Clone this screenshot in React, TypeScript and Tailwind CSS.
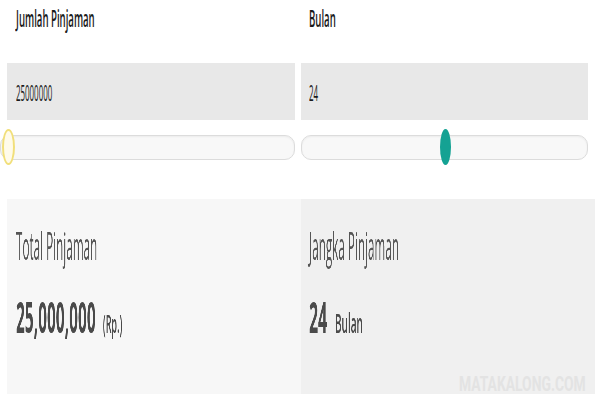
import React from "react";

const font = { fontFamily: '"Open Sans", "Noto Sans", sans-serif' };

export default function App() {
  return (
    <div className="relative w-[600px] h-[400px] bg-white overflow-hidden antialiased" style={font}>
      <div className="flex">
        {/* left column */}
        <div className="w-[295px] flex flex-col">
          <div className="pl-[16px] mt-[6px] h-[24px] leading-none">
            <span className="inline-block origin-left scale-x-[0.40] text-[24px] font-semibold text-[#1a1a1a] whitespace-nowrap">
              Jumlah Pinjaman
            </span>
          </div>
          <div className="ml-[7px] mt-[33px] h-[57px] bg-[#e8e8e8] flex items-center pl-[9px]">
            <span className="inline-block origin-left scale-x-[0.36] text-[22px] text-[#1a1a1a] leading-none whitespace-nowrap">
              25000000
            </span>
          </div>
          <div className="relative mt-[15px] h-[25px] rounded-[10px] border border-[#dcdcdc] bg-[#f8f8f8] shadow-[inset_0_1px_2px_rgba(0,0,0,0.05)]">
            <div className="absolute left-[1px] top-[-7px] w-[13px] h-[36px] rounded-[50%] border-2 border-[#f1df7a] bg-[#fffbea]" />
          </div>
        </div>
        {/* right column */}
        <div className="ml-[6px] w-[287px] flex flex-col">
          <div className="pl-[8px] mt-[6px] h-[24px] leading-none">
            <span className="inline-block origin-left scale-x-[0.40] text-[24px] font-semibold text-[#1a1a1a] whitespace-nowrap">
              Bulan
            </span>
          </div>
          <div className="mt-[33px] h-[57px] bg-[#e8e8e8] flex items-center pl-[8px]">
            <span className="inline-block origin-left scale-x-[0.36] text-[22px] text-[#1a1a1a] leading-none whitespace-nowrap">
              24
            </span>
          </div>
          <div className="relative mt-[15px] h-[25px] rounded-[10px] border border-[#dcdcdc] bg-[#f8f8f8] shadow-[inset_0_1px_2px_rgba(0,0,0,0.05)]">
            <div className="absolute left-[138px] top-[-7px] w-[11px] h-[36px] rounded-[50%] bg-[#14a293]" />
          </div>
        </div>
      </div>

      {/* bottom panels */}
      <div className="flex mt-[39px] pl-[7px]">
        <div className="w-[294px] h-[195px] bg-[#f7f7f7] flex flex-col pl-[9px]">
          <div className="mt-[26px] h-[39px] leading-none">
            <span className="inline-block origin-left scale-x-[0.30] will-change-transform text-[39px] font-normal text-[#555] whitespace-nowrap">
              Total Pinjaman
            </span>
          </div>
          <div className="mt-[31px] leading-none">
            <span className="inline-flex items-baseline origin-left scale-x-[0.36] will-change-transform text-[#4a4a4a] whitespace-nowrap">
              <span className="text-[43px] font-bold leading-none">25,000,000</span>
              <span className="ml-[20px] text-[25px] font-semibold leading-none">(Rp.)</span>
            </span>
          </div>
        </div>
        <div className="w-[294px] h-[195px] bg-[#f0f0f0] flex flex-col pl-[8px]">
          <div className="mt-[26px] h-[39px] leading-none">
            <span className="inline-block origin-left scale-x-[0.30] will-change-transform text-[39px] font-normal text-[#555] whitespace-nowrap">
              Jangka Pinjaman
            </span>
          </div>
          <div className="mt-[31px] leading-none">
            <span className="inline-flex items-baseline origin-left scale-x-[0.37] will-change-transform text-[#4a4a4a] whitespace-nowrap">
              <span className="text-[43px] font-bold leading-none">24</span>
              <span className="ml-[21px] text-[27px] font-semibold leading-none">Bulan</span>
            </span>
          </div>
        </div>
      </div>

      <div className="absolute left-[459px] top-[374px] leading-none">
        <span className="inline-block origin-left scale-x-[0.66] text-[21px] font-bold text-[#e3e3e3] whitespace-nowrap" style={{ fontFamily: 'Roboto, "Liberation Sans", sans-serif' }}>
          MATAKALONG.COM
        </span>
      </div>
    </div>
  );
}
